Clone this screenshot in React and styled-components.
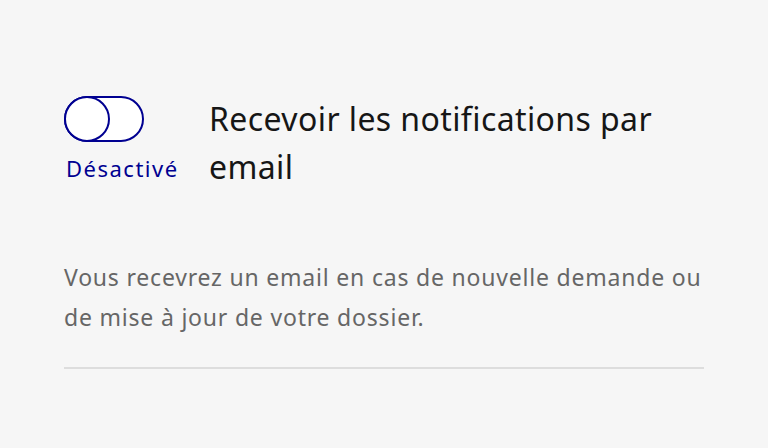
import React, { useState } from "react";
import styled, { createGlobalStyle } from "styled-components";

const GlobalStyle = createGlobalStyle`
  html, body {
    margin: 0;
    padding: 0;
    background: #f6f6f6;
  }
  body {
    font-family: "Noto Sans", "Open Sans", sans-serif;
    color: #161616;
  }
`;

const Page = styled.div`
  width: 768px;
  height: 448px;
  box-sizing: border-box;
  padding: 96px 64px 0;
  background: #f6f6f6;
`;

const Row = styled.div`
  display: flex;
  align-items: flex-start;
`;

const ToggleColumn = styled.div`
  display: flex;
  flex-direction: column;
  align-items: flex-start;
  width: 145px;
  flex-shrink: 0;
`;

const Track = styled.button`
  position: relative;
  width: 80px;
  height: 46px;
  padding: 0;
  border: 2px solid #000091;
  border-radius: 23px;
  background: #fff;
  cursor: pointer;
  box-sizing: border-box;
`;

const Knob = styled.span`
  position: absolute;
  top: -2px;
  left: ${({ $on }) => ($on ? "32px" : "-2px")};
  width: 46px;
  height: 46px;
  box-sizing: border-box;
  border: 2px solid #000091;
  border-radius: 50%;
  background: ${({ $on }) => ($on ? "#000091" : "#fff")};
`;

const State = styled.span`
  margin-top: 12px;
  margin-left: 2px;
  font-size: 22px;
  line-height: 28px;
  letter-spacing: 1.5px;
  color: #000091;
`;

const Label = styled.label`
  margin-top: -1px;
  font-size: 32px;
  line-height: 48px;
  letter-spacing: 0.4px;
  color: #161616;
  max-width: 460px;
  cursor: pointer;
`;

const Hint = styled.p`
  margin: 66px 0 0;
  font-size: 23px;
  line-height: 40px;
  letter-spacing: 0.8px;
  color: #666;
`;

const Divider = styled.hr`
  margin: 30px 0 0;
  border: none;
  height: 2px;
  background: #dddddd;
`;

export default function App() {
  const [on, setOn] = useState(false);
  return (
    <>
      <GlobalStyle />
      <Page>
        <Row>
          <ToggleColumn>
            <Track
              role="switch"
              aria-checked={on}
              onClick={() => setOn(!on)}
            >
              <Knob $on={on} />
            </Track>
            <State>{on ? "Activé" : "Désactivé"}</State>
          </ToggleColumn>
          <Label onClick={() => setOn(!on)}>
            Recevoir les notifications par email
          </Label>
        </Row>
        <Hint>
          Vous recevrez un email en cas de nouvelle demande ou de mise à jour
          de votre dossier.
        </Hint>
        <Divider />
      </Page>
    </>
  );
}
